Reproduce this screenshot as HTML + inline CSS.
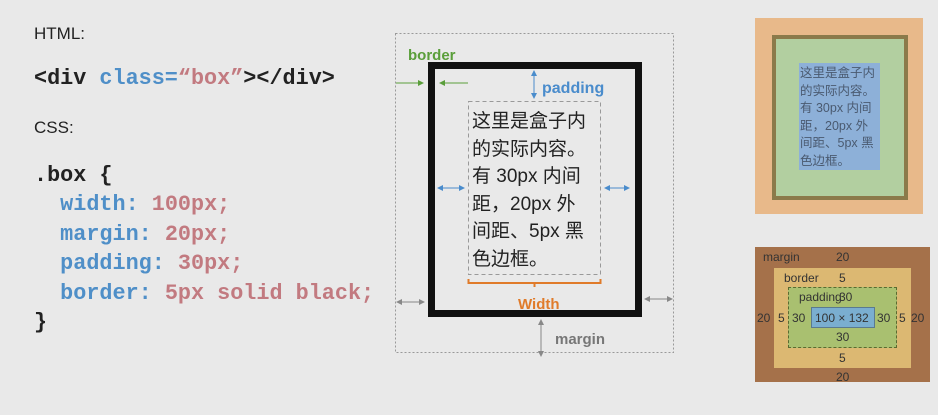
<!DOCTYPE html>
<html><head><meta charset="utf-8"><style>
body{margin:0;width:938px;height:415px;background:#e9e9e9;position:relative;overflow:hidden;font-family:"Liberation Sans","Noto Sans CJK SC",sans-serif}
.a{position:absolute;white-space:nowrap}
.m{font-family:"Liberation Mono",monospace;font-weight:bold;font-size:21.8px;color:#222}
.b{color:#4f8fc8}.p{color:#c27a80}
</style></head><body>
<div class="a" style="left:34px;top:24px;font-size:17px;color:#222">HTML:</div>
<div class="a m" style="left:34px;top:66px">&lt;div <span class="b">class=</span><span class="p">“box”</span>&gt;&lt;/div&gt;</div>
<div class="a" style="left:34px;top:118px;font-size:17px;color:#222">CSS:</div>
<div class="a m" style="left:34px;top:161px;line-height:29.4px">.box {<br>&nbsp;&nbsp;<span class="b">width:</span> <span class="p">100px;</span><br>&nbsp;&nbsp;<span class="b">margin:</span> <span class="p">20px;</span><br>&nbsp;&nbsp;<span class="b">padding:</span> <span class="p">30px;</span><br>&nbsp;&nbsp;<span class="b">border:</span> <span class="p">5px solid black;</span><br>}</div>

<svg class="a" style="left:0;top:0" width="938" height="415">
<defs>
<marker id="g" markerWidth="6" markerHeight="6" refX="5" refY="3" orient="auto"><path d="M0,0L6,3L0,6z" fill="#5a9e3a"/></marker>
<marker id="bl" markerWidth="6" markerHeight="6" refX="5" refY="3" orient="auto-start-reverse"><path d="M0,0L6,3L0,6z" fill="#4a8ccc"/></marker>
<marker id="gr" markerWidth="6" markerHeight="6" refX="5" refY="3" orient="auto-start-reverse"><path d="M0,0L6,3L0,6z" fill="#888"/></marker>
</defs>
<rect x="395.5" y="33.5" width="278" height="319" fill="none" stroke="#999" stroke-dasharray="2 2"/>
<rect x="431.5" y="65.5" width="207" height="248" fill="none" stroke="#111" stroke-width="7"/>
<rect x="468.5" y="101.5" width="132" height="173" fill="none" stroke="#999" stroke-dasharray="4 3"/>
<line x1="396" y1="83" x2="423" y2="83" stroke="#5a9e3a" marker-end="url(#g)"/>
<line x1="468" y1="83" x2="440" y2="83" stroke="#5a9e3a" marker-end="url(#g)"/>
<line x1="534" y1="71" x2="534" y2="98" stroke="#4a8ccc" marker-start="url(#bl)" marker-end="url(#bl)"/>
<line x1="438" y1="188" x2="464" y2="188" stroke="#4a8ccc" marker-start="url(#bl)" marker-end="url(#bl)"/>
<line x1="605" y1="188" x2="629" y2="188" stroke="#4a8ccc" marker-start="url(#bl)" marker-end="url(#bl)"/>
<path d="M468.5,279 V283 H600.5 V279 M534.5,283 V287" fill="none" stroke="#e07b2a" stroke-width="2"/>
<line x1="397" y1="302" x2="424" y2="302" stroke="#888" marker-start="url(#gr)" marker-end="url(#gr)"/>
<line x1="645" y1="299" x2="672" y2="299" stroke="#888" marker-start="url(#gr)" marker-end="url(#gr)"/>
<line x1="541" y1="320" x2="541" y2="356" stroke="#888" marker-start="url(#gr)" marker-end="url(#gr)"/>
<text x="408" y="60" font-family="Liberation Sans" font-weight="bold" font-size="15" fill="#5a9e3a">border</text>
<text x="542" y="93" font-family="Liberation Sans" font-weight="bold" font-size="16" fill="#4a8ccc">padding</text>
<text x="518" y="309" font-family="Liberation Sans" font-weight="bold" font-size="15" fill="#e07b2a">Width</text>
<text x="555" y="344" font-family="Liberation Sans" font-weight="bold" font-size="15" fill="#777">margin</text>
</svg>
<div class="a" style="left:472px;top:108px;font-size:19px;line-height:27.5px;color:#222">这里是盒子内<br>的实际内容。<br>有 30px 内间<br>距，20px 外<br>间距、5px 黑<br>色边框。</div>

<div class="a" style="left:755px;top:18px;width:168px;height:196px;background:#e8b98a"></div>
<div class="a" style="left:772px;top:35px;width:128px;height:157px;border:4px solid #8b7a4a;background:#b2cfa0"></div>
<div class="a" style="left:799px;top:63px;width:81px;height:107px;background:#8db0d8"></div>
<div class="a" style="left:800px;top:65px;font-size:12.5px;line-height:17.6px;color:#4a5a70">这里是盒子内<br>的实际内容。<br>有 30px 内间<br>距，20px 外<br>间距、5px 黑<br>色边框。</div>

<div class="a" style="left:755px;top:247px;width:175px;height:135px;background:#a5714a"></div>
<div class="a" style="left:774px;top:268px;width:137px;height:100px;background:#dcb872"></div>
<div class="a" style="left:788px;top:287px;width:107px;height:59px;border:1px dashed #5a6a30;background:#a9c070"></div>
<div class="a" style="left:811px;top:307px;width:62px;height:19px;border:1px solid #5a7a90;background:#7aaed0"></div>
<div style="position:absolute;left:0;top:0;font-size:12px;color:#333">
<div class="a" style="left:763px;top:250px">margin</div>
<div class="a" style="left:836px;top:250px">20</div>
<div class="a" style="left:784px;top:271px">border</div>
<div class="a" style="left:839px;top:271px">5</div>
<div class="a" style="left:799px;top:290px">padding</div>
<div class="a" style="left:839px;top:290px">30</div>
<div class="a" style="left:757px;top:311px">20</div>
<div class="a" style="left:778px;top:311px">5</div>
<div class="a" style="left:792px;top:311px">30</div>
<div class="a" style="left:815px;top:311px">100 × 132</div>
<div class="a" style="left:877px;top:311px">30</div>
<div class="a" style="left:899px;top:311px">5</div>
<div class="a" style="left:911px;top:311px">20</div>
<div class="a" style="left:836px;top:330px">30</div>
<div class="a" style="left:839px;top:351px">5</div>
<div class="a" style="left:836px;top:370px">20</div>
</div>
</body></html>
